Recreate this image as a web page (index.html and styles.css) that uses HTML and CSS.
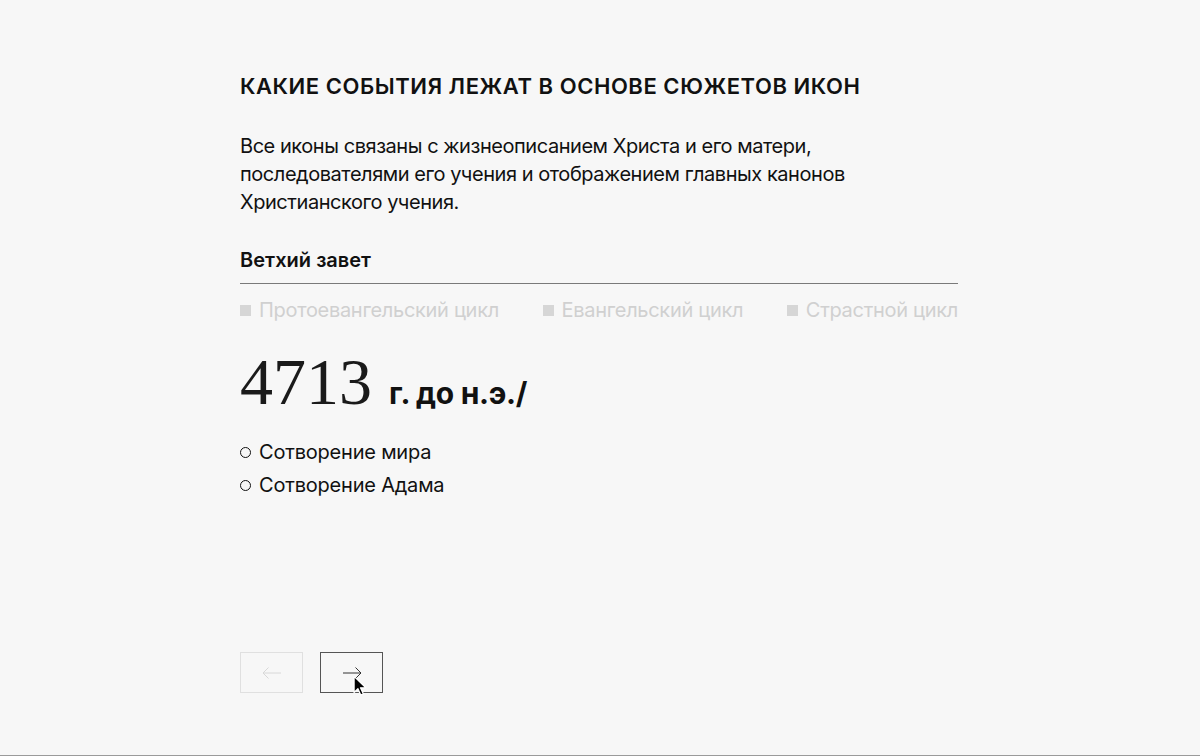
FILE: index.html
```html
<!DOCTYPE html>
<html lang="ru">
<head>
    <meta charset="UTF-8">
    <meta name="viewport" content="width=device-width, initial-scale=1.0">
    <title>Сюжеты икон</title>
    <link rel="stylesheet" href="styles.css">
</head>
<body>
    <main class="page">
        <section class="content">
            <h1 class="title">Какие события лежат в основе сюжетов икон</h1>
            <p class="intro">Все иконы связаны с жизнеописанием Христа и его матери, последователями его учения и отображением главных канонов Христианского учения.</p>

            <h2 class="period">Ветхий завет</h2>

            <div class="tabs">
                <span class="tab">Протоевангельский цикл</span>
                <span class="tab">Евангельский цикл</span>
                <span class="tab">Страстной цикл</span>
            </div>

            <div class="date">
                <span class="year">4713</span>
                <span class="era">г. до н.э./</span>
            </div>

            <ul class="events">
                <li>Сотворение мира</li>
                <li>Сотворение Адама</li>
            </ul>
        </section>

        <!-- Стрелки -->
        <div class="arrows">
            <button class="arrow disabled" aria-label="Назад">
                <svg width="20" height="12" viewBox="0 0 20 12"><path d="M19 6H1M6.5 0.5L1 6l5.5 5.5" fill="none" stroke="currentColor" stroke-width="1"/></svg>
            </button>
            <button class="arrow" aria-label="Вперёд">
                <svg width="20" height="12" viewBox="0 0 20 12"><path d="M1 6h18M13.5 0.5L19 6l-5.5 5.5" fill="none" stroke="currentColor" stroke-width="1"/></svg>
                <svg class="cursor" width="15" height="22" viewBox="0 0 14 20"><path d="M1 1v15l3.6-3.4 2.6 5.8 2.4-1.1-2.6-5.6H12z" fill="#000" stroke="#fff" stroke-width="1.2" stroke-linejoin="round"/></svg>
            </button>
        </div>
    </main>
</body>
</html>
```

FILE: styles.css
```css
* {
    box-sizing: border-box;
    margin: 0;
    padding: 0;
}
html, body {
    height: 100%;
}
body {
    font-family: Inter, "Noto Sans", sans-serif;
    background-color: #f7f7f7;
    color: #111;
    border-bottom: 1px solid #9a9a9a;
}
.page {
    height: 100%;
    display: flex;
    flex-direction: column;
    justify-content: space-between;
    padding: 72px 0 62px 240px;
}
.content {
    width: 718px;
}
.title {
    font-size: 22px;
    font-weight: 600;
    text-transform: uppercase;
    letter-spacing: 0.55px;
    line-height: 28px;
}
.intro {
    max-width: 620px;
    margin-top: 32px;
    font-size: 20px;
    line-height: 28px;
    letter-spacing: -0.45px;
    font-weight: 400;
}
.period {
    margin-top: 30px;
    font-size: 20px;
    font-weight: 600;
    line-height: 28px;
    padding-bottom: 9px;
    border-bottom: 1px solid #7a7a7a;
}
.tabs {
    display: flex;
    justify-content: space-between;
    margin-top: 12px;
}
.tab {
    display: flex;
    align-items: center;
    gap: 8px;
    color: #d0d0d0;
    font-size: 20px;
    line-height: 28px;
    letter-spacing: -0.3px;
}
.tab::before {
    content: "";
    width: 11px;
    height: 11px;
    background-color: #d6d6d6;
}
.date {
    display: flex;
    align-items: baseline;
    gap: 17px;
    margin-top: 18px;
}
.year {
    font-family: "Liberation Serif", "DejaVu Serif", serif;
    font-size: 66px;
    line-height: 80px;
    color: #1a1a1a;
}
.era {
    font-size: 30px;
    font-weight: 700;
    letter-spacing: -0.3px;
}
.events {
    list-style: none;
    margin-top: 14px;
}
.events li {
    display: flex;
    align-items: center;
    gap: 8px;
    font-size: 20px;
    line-height: 33px;
    letter-spacing: -0.2px;
}
.events li::before {
    content: "";
    width: 9px;
    height: 9px;
    border: 1.3px solid #111;
    border-radius: 50%;
}
.arrows {
    display: flex;
    gap: 17px;
}
.arrow {
    position: relative;
    width: 63px;
    height: 41px;
    display: flex;
    align-items: center;
    justify-content: center;
    background: transparent;
    border: 1px solid #555;
    color: #333;
    cursor: pointer;
}
.arrow.disabled {
    border-color: #e0e0e0;
    color: #d8d8d8;
}
.cursor {
    position: absolute;
    left: 32px;
    top: 22px;
}
```
